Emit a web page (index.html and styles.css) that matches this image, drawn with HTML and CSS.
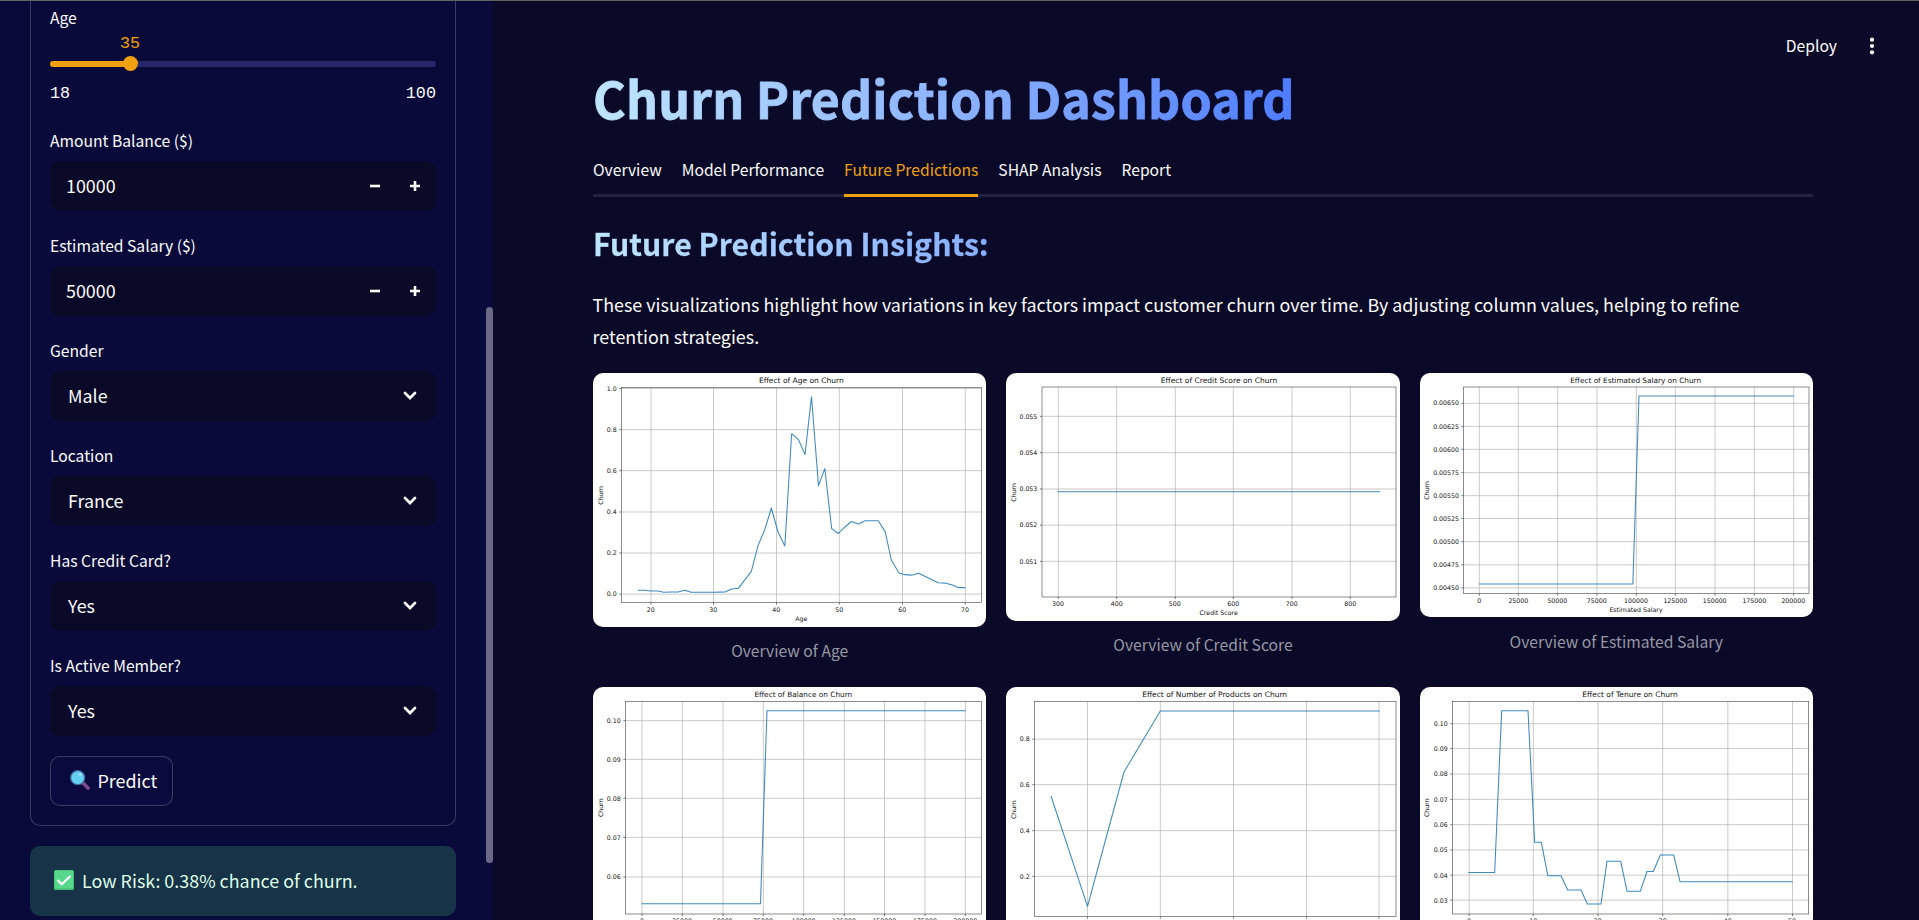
FILE: index.html
```html
<!DOCTYPE html>
<html lang="en">
<head>
<meta charset="utf-8">
<title>Churn Prediction Dashboard</title>
<link rel="stylesheet" href="styles.css">
</head>
<body>
<div class="app">
  <aside class="sidebar">
    <form class="form">
      <div class="field">
        <label class="label">Age</label>
        <div class="slider">
          <div class="slider-value"><span>35</span></div>
          <div class="track"><div class="fill"></div><div class="thumb"></div></div>
          <div class="range"><span>18</span><span>100</span></div>
        </div>
      </div>
      <div class="field">
        <label class="label">Amount Balance ($)</label>
        <div class="input"><span class="num">10000</span>
          <svg class="step" viewBox="0 0 40 50"><path d="M15 25h10"/></svg>
          <svg class="step" viewBox="0 0 40 50"><path d="M15 25h10M20 20v10"/></svg></div>
      </div>
      <div class="field">
        <label class="label">Estimated Salary ($)</label>
        <div class="input"><span class="num">50000</span>
          <svg class="step" viewBox="0 0 40 50"><path d="M15 25h10"/></svg>
          <svg class="step" viewBox="0 0 40 50"><path d="M15 25h10M20 20v10"/></svg></div>
      </div>
      <div class="field">
        <label class="label">Gender</label>
        <div class="input select"><span class="num">Male</span><svg class="chev" viewBox="0 0 14 10"><path d="M2 2l5 5 5-5"/></svg></div>
      </div>
      <div class="field">
        <label class="label">Location</label>
        <div class="input select"><span class="num">France</span><svg class="chev" viewBox="0 0 14 10"><path d="M2 2l5 5 5-5"/></svg></div>
      </div>
      <div class="field">
        <label class="label">Has Credit Card?</label>
        <div class="input select"><span class="num">Yes</span><svg class="chev" viewBox="0 0 14 10"><path d="M2 2l5 5 5-5"/></svg></div>
      </div>
      <div class="field">
        <label class="label">Is Active Member?</label>
        <div class="input select"><span class="num">Yes</span><svg class="chev" viewBox="0 0 14 10"><path d="M2 2l5 5 5-5"/></svg></div>
      </div>
      <button type="button" class="predict">
        <svg class="emoji" viewBox="0 0 20 20"><path d="M13 13l5 5" stroke="#7e4c88" stroke-width="3.6" stroke-linecap="round"/><circle cx="7.7" cy="7.7" r="7" fill="#64d0f2" stroke="#416a9c" stroke-width="1.2"/><circle cx="10.3" cy="4.4" r="1.2" fill="#b9eefb"/></svg>
        <span>Predict</span>
      </button>
    </form>
    <div class="alert">
      <svg class="emoji" viewBox="0 0 20 20"><rect width="20" height="20" rx="1.5" fill="#40bd77"/><rect x="0.8" y="0.8" width="18.2" height="17.6" rx="1" fill="#57d88d"/><path d="M3.5 10l4.3 4.3 8.6-8.4" fill="none" stroke="#fff" stroke-width="2.1"/></svg>
      <span>Low Risk: 0.38% chance of churn.</span>
    </div>
    <div class="scrollbar"></div>
  </aside>
  <main class="main">
    <div class="toolbar">
      <span>Deploy</span>
      <svg class="dots" viewBox="0 0 6 20"><circle cx="3" cy="3.7" r="2.1"/><circle cx="3" cy="10" r="2.1"/><circle cx="3" cy="16.3" r="2.1"/></svg>
    </div>
    <h1 class="title"><span>Churn Prediction Dashboard</span></h1>
    <nav class="tabs">
      <span class="tab">Overview</span><span class="tab">Model Performance</span><span class="tab active">Future Predictions</span><span class="tab">SHAP Analysis</span><span class="tab">Report</span>
    </nav>
    <h2 class="subtitle"><span>Future Prediction Insights:</span></h2>
    <p class="text">These visualizations highlight how variations in key factors impact customer churn over time. By adjusting column values, helping to refine<br>retention strategies.</p>

    <div class="row first">
      <figure class="fig">
        <svg class="chart" viewBox="24 22 1180 762">
          <path class="grid" d="M198 66V710M385.500 66V710M574.500 66V710M763 66V710M952.500 66V710M1141 66V710M109 68.500H1190M109 192H1190M109 315H1190M109 439H1190M109 562H1190M109 685.500H1190"/>
          <path class="tick" d="M198 710v7M385.500 710v7M574.500 710v7M763 710v7M952.500 710v7M1141 710v7M109 68.500h-6M109 192h-6M109 315h-6M109 439h-6M109 562h-6M109 685.500h-6"/>
          <path class="line" d="M158 674L180 674 198 676 219 676 236 680 258 679 279 679 299 673.500 318 680 385 680 400 679.500 420 679 440 670 460 668 499 617 519 540 540 490 559 427 579 499 599.500 541 620 204 640 221 660 267 679.500 93 700.500 360 719.500 309 740 489 760 503.500 780 484 799 467.500 820 475 840 465.500 880 465.500 900.500 498 919 583 942 622 960 627 980 628.500 1001 622.500 1060 651.500 1082 652.500 1100 657.500 1121 666 1141 666"/>
          <rect class="frame" x="109" y="66" width="1081" height="644"/>
          <text class="ct" x="649" y="53">Effect of Age on Churn</text>
          <g class="xt"><text x="197" y="739">20</text><text x="385" y="739">30</text><text x="574" y="739">40</text><text x="763" y="739">50</text><text x="952" y="739">60</text><text x="1140" y="739">70</text><text x="649" y="767">Age</text></g>
          <g class="yt"><text x="95" y="76">1.0</text><text x="95" y="199">0.8</text><text x="95" y="322">0.6</text><text x="95" y="446">0.4</text><text x="95" y="569">0.2</text><text x="95" y="692">0.0</text></g>
          <text class="yl" transform="translate(53 389) rotate(-90)">Churn</text>
        </svg>
        <figcaption>Overview of Age</figcaption>
      </figure>
      <figure class="fig">
        <svg class="chart" viewBox="33 22 1180 744">
          <path class="grid" d="M190 64V693M365 64V693M541 64V693M715 64V693M891 64V693M1066 64V693M141 152H1203M141 261H1203M141 370H1203M141 478.500H1203M141 587H1203"/>
          <path class="tick" d="M190 693v7M365 693v7M541 693v7M715 693v7M891 693v7M1066 693v7M141 152h-6M141 261h-6M141 370h-6M141 478.500h-6M141 587h-6"/>
          <path class="line" d="M188 378.500H1155"/>
          <rect class="frame" x="141" y="64" width="1062" height="630"/>
          <text class="ct" x="672" y="52">Effect of Credit Score on Churn</text>
          <g class="xt"><text x="189" y="722">300</text><text x="365" y="722">400</text><text x="539" y="722">500</text><text x="715" y="722">600</text><text x="890" y="722">700</text><text x="1066" y="722">800</text><text x="671" y="749">Credit Score</text></g>
          <g class="yt"><text x="127" y="159">0.055</text><text x="127" y="268">0.054</text><text x="127" y="377">0.053</text><text x="127" y="485">0.052</text><text x="127" y="594">0.051</text></g>
          <text class="yl" transform="translate(62 380) rotate(-90)">Churn</text>
        </svg>
        <figcaption>Overview of Credit Score</figcaption>
      </figure>
      <figure class="fig">
        <svg class="chart" viewBox="30 22 1180 732">
          <path class="grid" d="M208 64V683M325 64V683M443 64V683M561 64V683M679 64V683M796 64V683M915 64V683M1033 64V683M1151 64V683M160 113H1197M160 182H1197M160 251H1197M160 321H1197M160 390H1197M160 458.500H1197M160 528H1197M160 597.500H1197M160 666.500H1197"/>
          <path class="tick" d="M208 683v7M325 683v7M443 683v7M561 683v7M679 683v7M796 683v7M915 683v7M1033 683v7M1151 683v7M160 113h-6M160 182h-6M160 251h-6M160 321h-6M160 390h-6M160 458.500h-6M160 528h-6M160 597.500h-6M160 666.500h-6"/>
          <path class="line" d="M207 655H668.500L687 91H1151"/>
          <rect class="frame" x="160" y="64" width="1037" height="619"/>
          <text class="ct small" x="677" y="51">Effect of Estimated Salary on Churn</text>
          <g class="xt"><text x="208" y="711">0</text><text x="325" y="711">25000</text><text x="442" y="711">50000</text><text x="560" y="711">75000</text><text x="678" y="711">100000</text><text x="796" y="711">125000</text><text x="914" y="711">150000</text><text x="1033" y="711">175000</text><text x="1150" y="711">200000</text><text x="678" y="738">Estimated Salary</text></g>
          <g class="yt"><text x="147" y="119">0.00650</text><text x="147" y="189">0.00625</text><text x="147" y="258">0.00600</text><text x="147" y="328">0.00575</text><text x="147" y="397">0.00550</text><text x="147" y="466">0.00525</text><text x="147" y="535">0.00500</text><text x="147" y="604">0.00475</text><text x="147" y="673">0.00450</text></g>
          <text class="yl" transform="translate(58 374) rotate(-90)">Churn</text>
        </svg>
        <figcaption>Overview of Estimated Salary</figcaption>
      </figure>
    </div>

    <div class="row">
      <figure class="fig">
        <svg class="chart" viewBox="24 19 1180 754">
          <path class="grid" d="M171 62V699M292 62V699M414 62V699M535 62V699M656 62V699M778 62V699M898.500 62V699M1020 62V699M1141 62V699M121 120H1190M121 236H1190M121 353H1190M121 470H1190M121 589H1190"/>
          <path class="tick" d="M171 699v7M292 699v7M414 699v7M535 699v7M656 699v7M778 699v7M898.500 699v7M1020 699v7M1141 699v7M121 120h-6M121 236h-6M121 353h-6M121 470h-6M121 589h-6"/>
          <path class="line" d="M169 669.500H526.500L546 90H1142"/>
          <rect class="frame" x="121" y="62" width="1069" height="638"/>
          <text class="ct small" x="655" y="50">Effect of Balance on Churn</text>
          <g class="xt"><text x="171" y="728">0</text><text x="291" y="728">25000</text><text x="413" y="728">50000</text><text x="534" y="728">75000</text><text x="656" y="728">100000</text><text x="777" y="728">125000</text><text x="898" y="728">150000</text><text x="1020" y="728">175000</text><text x="1141" y="728">200000</text></g>
          <g class="yt"><text x="107" y="127">0.10</text><text x="107" y="244">0.09</text><text x="107" y="360">0.08</text><text x="107" y="477">0.07</text><text x="107" y="596">0.06</text></g>
          <text class="yl" transform="translate(53 381) rotate(-90)">Churn</text>
        </svg>
      </figure>
      <figure class="fig">
        <svg class="chart" viewBox="33 19 1180 754">
          <path class="grid" d="M277.500 63V707M496 63V707M715.500 63V707M934.500 63V707M1152 63V707M118 175.500H1203M118 312H1203M118 450H1203M118 587H1203"/>
          <path class="tick" d="M277.500 707v7M496 707v7M715.500 707v7M934.500 707v7M1152 707v7M118 175.500h-6M118 312h-6M118 450h-6M118 587h-6"/>
          <path class="line" d="M168 346L277.500 677 387 274 496 91H1154"/>
          <rect class="frame" x="118" y="63" width="1085" height="644"/>
          <text class="ct" x="659" y="50">Effect of Number of Products on Churn</text>
          <g class="yt"><text x="104" y="182">0.8</text><text x="104" y="319">0.6</text><text x="104" y="457">0.4</text><text x="104" y="594">0.2</text></g>
          <text class="yl" transform="translate(62 387) rotate(-90)">Churn</text>
        </svg>
      </figure>
      <figure class="fig">
        <svg class="chart" viewBox="30 19 1180 754">
          <path class="grid" d="M177.500 62V699M370 62V699M564 62V699M758 62V699M953.500 62V699M1147.500 62V699M127 129H1196M127 203.500H1196M127 280H1196M127 356H1196M127 432H1196M127 508H1196M127 583.500H1196M127 658.500H1196"/>
          <path class="tick" d="M177.500 699v7M370 699v7M564 699v7M758 699v7M953.500 699v7M1147.500 699v7M127 129h-6M127 203.500h-6M127 280h-6M127 356h-6M127 432h-6M127 508h-6M127 583.500h-6M127 658.500h-6"/>
          <path class="line" d="M175 575.500H254L275 90H354L374 485H394L413.500 585H453L473 628H513L532 670H573L591 541.500H632L651 631.500H691L711 572.500H730L751 523H791L810 603H1148"/>
          <rect class="frame" x="127" y="62" width="1069" height="638"/>
          <text class="ct" x="660" y="50">Effect of Tenure on Churn</text>
          <g class="xt"><text x="177" y="728">0</text><text x="370" y="728">10</text><text x="563" y="728">20</text><text x="758" y="728">30</text><text x="953" y="728">40</text><text x="1146" y="728">50</text></g>
          <g class="yt"><text x="113" y="136">0.10</text><text x="113" y="212">0.09</text><text x="113" y="287">0.08</text><text x="113" y="363">0.07</text><text x="113" y="439">0.06</text><text x="113" y="515">0.05</text><text x="113" y="591">0.04</text><text x="113" y="666">0.03</text></g>
          <text class="yl" transform="translate(58 381) rotate(-90)">Churn</text>
        </svg>
      </figure>
    </div>
  </main>
</div>
</body>
</html>
```
FILE: styles.css
```css
* { box-sizing: border-box; }
html, body { margin: 0; height: 920px; overflow: hidden; }
body {
  background: #0a0a28;
  color: #fafafa;
  font-family: "Noto Sans CJK SC", "Noto Sans", sans-serif;
  font-size: 17.9px;
  line-height: 32px;
}
.app { display: flex; height: 920px; border-top: 1px solid #62645f; overflow: hidden; }
.sidebar {
  position: relative;
  flex: none;
  width: 493px;
  padding: 0 37px 0 30px;
  background: #0a0a3a;
  overflow: hidden;
}
.scrollbar {
  position: absolute;
  right: 0;
  top: 306px;
  width: 7px;
  height: 556px;
  border-radius: 4px;
  background: #6b6786;
}
.form {
  display: flex;
  flex-direction: column;
  gap: 20px;
  height: 824.7px;
  padding: 1.7px 19px 0;
  border: 1px solid rgba(250, 250, 250, 0.2);
  border-top: 0;
  border-radius: 0 0 10px 10px;
}
.label { display: block; height: 30px; margin-bottom: 5px; font-size: 15.67px; line-height: 29px; }
.field:first-child .label { margin-bottom: 0; line-height: 30px; }
.slider { height: 73px; }
.slider-value {
  height: 22px;
  padding-left: 70px;
  color: #f0a010;
  font: 16.8px/22px "Liberation Mono", monospace;
}
.track { position: relative; height: 6px; margin-top: 6.3px; border-radius: 3px; background: #28276a; }
.fill { width: 80px; height: 6px; border-radius: 3px; background: #f0a010; }
.thumb { position: absolute; left: 72.5px; top: -4.5px; width: 15px; height: 15px; border-radius: 50%; background: #f0a010; }
.range { display: flex; justify-content: space-between; margin-top: 15.7px; font: 16.8px/22px "Liberation Mono", monospace; }
.input {
  display: flex;
  align-items: center;
  height: 50px;
  padding: 0 1px 0 16px;
  border-radius: 10px;
  background: #0a0a28;
}
.num { flex: 1; padding-bottom: 2px; }
.select { padding: 0 19px 0 18px; }
.step { width: 40px; height: 50px; fill: none; stroke: #fafafa; stroke-width: 2.6; }
.chev { width: 14px; height: 10px; fill: none; stroke: #fafafa; stroke-width: 2.7; stroke-linecap: round; }
.predict {
  display: flex;
  align-items: center;
  gap: 8px;
  width: 123px;
  height: 50px;
  padding: 0 0 1px 18.5px;
  border: 1px solid rgba(250, 250, 250, 0.2);
  border-radius: 10px;
  background: #0a0a3e;
  color: #fafafa;
  font: inherit;
}
.emoji { flex: none; width: 20px; height: 20px; }
.alert {
  display: flex;
  align-items: center;
  gap: 8px;
  height: 70px;
  margin-top: 20px;
  padding: 0 0 1px 24px;
  border-radius: 10px;
  background: #163347;
  color: #dffde9;
}
.main { flex: 1; padding: 0 106px 0 100px; }
.toolbar { display: flex; justify-content: flex-end; align-items: center; gap: 32px; height: 39px; margin: 25.5px -62px 0 0; font-size: 15.67px; }
.dots { width: 6px; height: 20px; fill: #fafafa; }
.title, .subtitle { margin: 0; font-weight: 700; }
.title { height: 66px; font-size: 50px; line-height: 62px; letter-spacing: 0.17px; -webkit-text-stroke: 0.9px transparent; }
.subtitle { height: 42px; margin-top: 26px; font-size: 30.25px; line-height: 40px; -webkit-text-stroke: 0.3px transparent; }
.title, .subtitle {
  background: linear-gradient(90deg, #bfe6ff 0, #86adff 33%, #4f7dff 57%);
  -webkit-background-clip: text;
  background-clip: text;
  color: transparent;
}
.tabs { display: flex; gap: 20px; height: 50px; margin-top: 15px; border-bottom: 3px solid #222140; font-size: 15.67px; line-height: 45px; }
.tab { height: 50px; }
.tab.active { color: #f0a010; border-bottom: 3px solid #f0a010; }
.text { margin: 23.5px 0 0 -0.5px; white-space: nowrap; }
.row { display: grid; grid-template-columns: repeat(3, 1fr); gap: 20px; height: 314px; }
.row.first { margin-top: 21px; }
.fig { margin: 0; }
.chart { display: block; width: 100%; border-radius: 10px; background: #fff; font-family: "DejaVu Sans", sans-serif; font-size: 18.8px; fill: #111; }
figcaption { margin-top: 8.5px; text-align: center; font-size: 15.67px; color: #9896a4; }
.grid { fill: none; stroke: #b0b0b0; stroke-width: 2; }
.tick { fill: none; stroke: #333; stroke-width: 2; }
.frame { fill: none; stroke: #555; stroke-width: 2; }
.line { fill: none; stroke: #1f77b4; stroke-opacity: 0.85; stroke-width: 3.2; stroke-linejoin: round; }
.ct { font-size: 22.6px; text-anchor: middle; }
.ct.small { font-size: 22px; }
.xt, .yl { text-anchor: middle; }
.yt { text-anchor: end; }
```
